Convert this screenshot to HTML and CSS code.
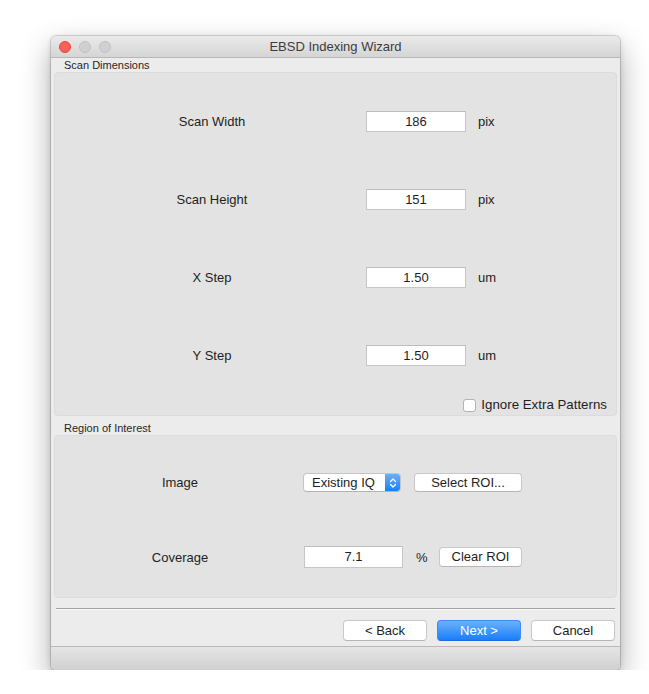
FILE: index.html
```html
<!DOCTYPE html>
<html>
<head>
<meta charset="utf-8">
<title>EBSD Indexing Wizard</title>
<link rel="stylesheet" href="styles.css">
</head>
<body>
<div class="desktop">
  <div class="window">
    <div class="titlebar">
      <div class="lights">
        <span class="light red"></span>
        <span class="light gray"></span>
        <span class="light gray"></span>
      </div>
      <div class="title">EBSD Indexing Wizard</div>
    </div>
    <div class="content">
      <div class="group-label">Scan Dimensions</div>
      <div class="groupbox scan-box">
        <div class="scan-grid">
          <div class="label">Scan Width</div>
          <div class="field">186</div>
          <div class="unit">pix</div>
          <div class="label">Scan Height</div>
          <div class="field">151</div>
          <div class="unit">pix</div>
          <div class="label">X Step</div>
          <div class="field">1.50</div>
          <div class="unit">um</div>
          <div class="label">Y Step</div>
          <div class="field">1.50</div>
          <div class="unit">um</div>
        </div>
        <div class="check-row">
          <span class="checkbox"></span>
          <span class="check-text">Ignore Extra Patterns</span>
        </div>
      </div>
      <div class="group-label roi-label">Region of Interest</div>
      <div class="groupbox roi-box">
        <div class="roi-grid">
          <div class="label roi-l">Image</div>
          <div class="popup">
            <span class="popup-text">Existing IQ</span>
            <span class="popup-arrows">
              <svg width="8" height="12" viewBox="0 0 8 12"><path d="M1.5 4.5 L4 2 L6.5 4.5" fill="none" stroke="#fff" stroke-width="1.3" stroke-linecap="round" stroke-linejoin="round"/><path d="M1.5 7.5 L4 10 L6.5 7.5" fill="none" stroke="#fff" stroke-width="1.3" stroke-linecap="round" stroke-linejoin="round"/></svg>
            </span>
          </div>
          <div class="btn btn-select">Select ROI...</div>
          <div class="label roi-l">Coverage</div>
          <div class="field field-cov">7.1</div>
          <div class="cov-extra">
            <span class="pct">%</span>
            <span class="btn btn-clear">Clear ROI</span>
          </div>
        </div>
      </div>
      <div class="separator"></div>
      <div class="nav-row">
        <div class="btn nav-btn">&lt; Back</div>
        <div class="btn nav-btn primary">Next &gt;</div>
        <div class="btn nav-btn">Cancel</div>
      </div>
    </div>
    <div class="bottombar"></div>
  </div>
</div>
</body>
</html>
```

FILE: styles.css
```css
html, body {
  margin: 0;
  padding: 0;
  background: #ffffff;
}
body {
  font-family: "Liberation Sans", Arial, sans-serif;
  font-size: 13px;
  color: #1e1e1e;
}
.desktop {
  padding: 36px 0 0 51px;
}
.window {
  width: 569px;
  height: 634px;
  background: #ececec;
  border-radius: 5px;
  box-shadow: 0 0 0 1px rgba(0,0,0,0.14), 0 12px 30px rgba(0,0,0,0.33), 0 2px 6px rgba(0,0,0,0.12);
  display: flex;
  flex-direction: column;
  overflow: hidden;
}
.titlebar {
  height: 21px;
  border-bottom: 1px solid #b8b8b8;
  background: linear-gradient(#ebeaeb, #d6d5d6);
  position: relative;
  display: flex;
  align-items: center;
  justify-content: center;
}
.lights {
  position: absolute;
  left: 8px;
  top: 5px;
  display: flex;
  gap: 8px;
}
.light {
  width: 12px;
  height: 12px;
  border-radius: 50%;
  box-sizing: border-box;
}
.light.red {
  background: #fc5f57;
  border: 1px solid #e1463f;
}
.light.gray {
  background: #d1d0d1;
  border: 1px solid #c2c1c2;
}
.title {
  color: #3c3c3c;
  font-size: 13px;
}
.content {
  flex: 1;
  padding: 0 3px;
  display: flex;
  flex-direction: column;
}
.group-label {
  height: 14px;
  line-height: 14px;
  font-size: 11px;
  padding-left: 10px;
  color: #262626;
}
.roi-label {
  margin-top: 5px;
}
.groupbox {
  background: #e3e3e3;
  border: 1px solid #dcdcdc;
  border-radius: 4px;
}
.scan-box {
  height: 344px;
  box-sizing: border-box;
  padding-top: 38px;
}
.scan-grid {
  display: grid;
  grid-template-columns: 311px 100px auto;
  grid-template-rows: repeat(4, 21px);
  row-gap: 57px;
  align-items: center;
}
.label {
  text-align: center;
  padding-left: 3px;
}
.field {
  height: 21px;
  box-sizing: border-box;
  background: #ffffff;
  border: 1px solid #c6c6c6;
  border-top-color: #bdbdbd;
  text-align: center;
  line-height: 19px;
}
.unit {
  line-height: 21px;
  padding-left: 12px;
}
.check-row {
  margin-top: 32px;
  height: 14px;
  display: flex;
  align-items: center;
  justify-content: flex-end;
  padding-right: 9px;
}
.checkbox {
  width: 13px;
  height: 13px;
  box-sizing: border-box;
  background: #fff;
  border: 1px solid #b3b3b3;
  border-radius: 3px;
  margin-right: 5px;
}
.check-text {
  line-height: 14px;
  font-size: 13.3px;
}
.roi-box {
  height: 163px;
  box-sizing: border-box;
  padding-top: 37px;
}
.roi-grid {
  display: grid;
  grid-template-columns: 248px 100px 119px;
  grid-template-rows: 19px 22px;
  row-gap: 54px;
  align-items: center;
}
.roi-l {
  padding-left: 2px;
}
.popup {
  width: 98px;
  height: 19px;
  box-sizing: border-box;
  background: #fff;
  border: 1px solid #c4c4c4;
  border-bottom-color: #b4b4b4;
  border-radius: 4px;
  display: flex;
  align-items: stretch;
  overflow: hidden;
}
.popup-text {
  flex: 1;
  padding-left: 8px;
  line-height: 17px;
}
.popup-arrows {
  width: 15px;
  background: linear-gradient(#69b1fa, #1b7ff9);
  display: flex;
  align-items: center;
  justify-content: center;
}
.btn {
  height: 20px;
  box-sizing: border-box;
  background: #fff;
  border: 1px solid #c8c8c8;
  border-bottom-color: #b5b5b5;
  border-radius: 4px;
  text-align: center;
  line-height: 18px;
  color: #1e1e1e;
}
.btn-select {
  margin-left: 11px;
  width: 108px;
  height: 19px;
  line-height: 17px;
}
.field-cov {
  height: 22px;
  line-height: 20px;
  margin-left: 1px;
}
.cov-extra {
  display: flex;
  align-items: center;
  justify-content: space-between;
  padding-left: 13px;
}
.btn-clear {
  width: 83px;
  flex-shrink: 0;
  display: block;
}
.separator {
  margin: 10px 2px 0 2px;
  height: 1px;
  background: #a4a4a4;
  border-bottom: 1px solid #f8f8f8;
}
.nav-row {
  margin-top: 10px;
  display: flex;
  justify-content: flex-end;
  gap: 10px;
  padding-right: 2px;
}
.nav-btn {
  width: 84px;
  height: 21px;
  line-height: 19px;
}
.nav-btn.primary {
  background: linear-gradient(#6bb1fb, #1a7ef9);
  border: 1px solid #3b8cf3;
  border-bottom-color: #1b6fe0;
  color: #ffffff;
}
.bottombar {
  height: 23px;
  border-top: 1px solid #b9b9b9;
  background: linear-gradient(#e6e5e6, #d1d0d1);
}
```
